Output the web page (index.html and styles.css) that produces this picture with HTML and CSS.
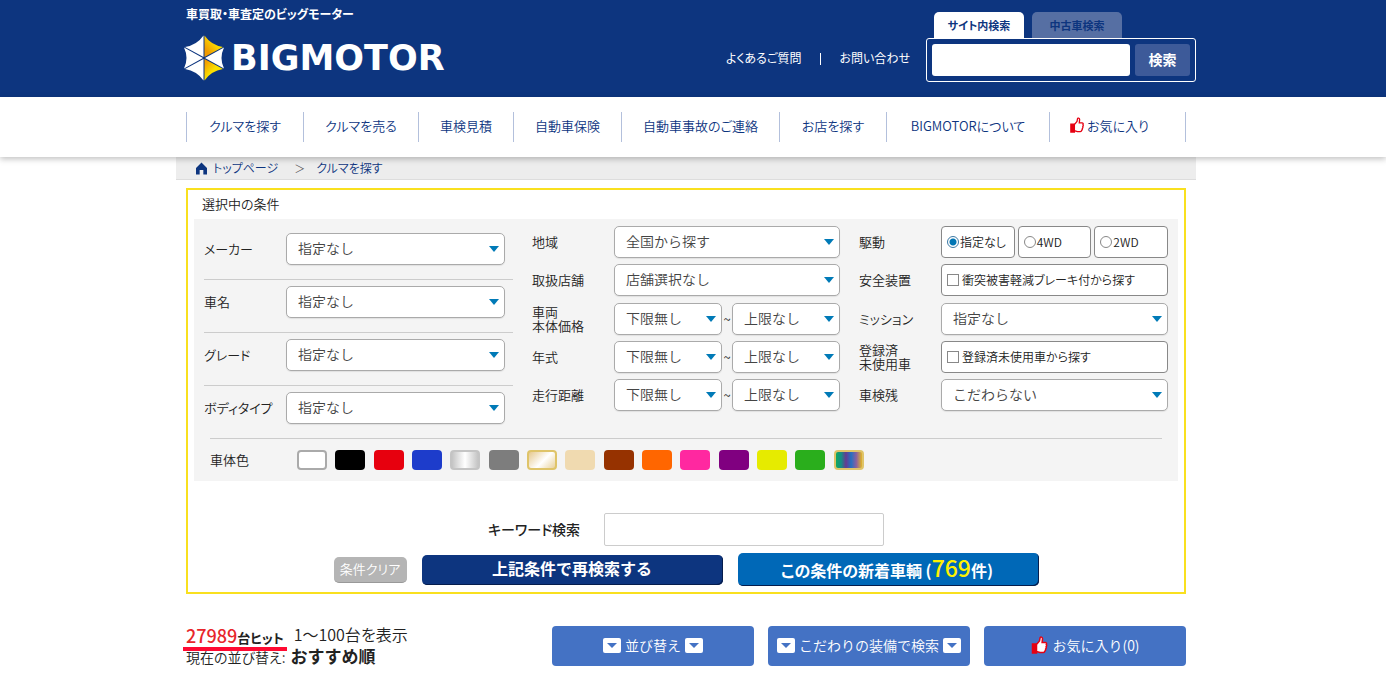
FILE: index.html
```html
<!DOCTYPE html>
<html lang="ja">
<head>
<meta charset="utf-8">
<meta name="viewport" content="width=device-width, initial-scale=1">
<title>クルマを探す | BIGMOTOR</title>
<link rel="stylesheet" href="styles.css">
</head>
<body>
<svg class="defs" aria-hidden="true">
  <symbol id="thumb" viewBox="0 0 16 18">
    <path class="thumb-cuff" d="M1 8h4v9H1z"/>
    <path class="thumb-hand" d="M5 8.5 8 5l.6-3.2C8.9.6 11 .9 11 2.8L10.6 6.500h3.200c1.200 0 1.600 1.200 1 2 .5.800.400 1.700-.2 2.300.3.900.1 1.700-.5 2.200.1 1-.1 1.700-.8 2.100-.1 1-.7 1.400-1.500 1.400H8.500L5 15.500z"/>
  </symbol>
</svg>
<header class="header">
  <div class="inner header-inner">
    <div class="brand">
      <p class="tagline">車買取・車査定のビッグモーター</p>
      <a class="logo" href="#">
        <svg class="logo-mark" viewBox="0 0 40 46" aria-hidden="true">
          <defs>
            <linearGradient id="gold1" x1="1" y1="0" x2="0" y2="1"><stop offset=".35" stop-color="#fbe000"/><stop offset=".8" stop-color="#f09a00"/></linearGradient>
            <linearGradient id="gold2" x1="0" y1="0" x2="1" y2="1"><stop offset=".1" stop-color="#f29c00"/><stop offset=".5" stop-color="#fbe000"/></linearGradient>
          </defs>
          <path fill="#fff" d="M19.500.5V22L1 12Q13 10 19.500.5zM0 12.500 19 23 0 33.500Q5 23 0 12.500zM1 34 19.500 24v21.500Q13 36 1 34zM40 12.500 21 23l19 10.500Q35 23 40 12.500z"/>
          <path fill="url(#gold1)" d="M20.500.5V22L39 12Q27 10 20.500.5z"/>
          <path fill="url(#gold2)" d="M39 34 20.500 24v21.500Q27 36 39 34z"/>
        </svg>
        <span class="logo-text">BIGMOTOR</span>
      </a>
    </div>
    <div class="header-right">
      <ul class="help-links">
        <li><a href="#">よくあるご質問</a></li>
        <li><a href="#">お問い合わせ</a></li>
      </ul>
      <form class="site-search">
        <div class="tabs">
          <button type="button" class="tab tab-on">サイト内検索</button>
          <button type="button" class="tab">中古車検索</button>
        </div>
        <div class="search-box">
          <input class="search-input" type="text" aria-label="サイト内検索">
          <button class="search-button">検索</button>
        </div>
      </form>
    </div>
  </div>
</header>
<nav class="nav">
  <ul class="inner nav-list">
    <li><a href="#">クルマを探す</a></li>
    <li><a href="#">クルマを売る</a></li>
    <li><a href="#">車検見積</a></li>
    <li><a href="#">自動車保険</a></li>
    <li><a href="#">自動車事故のご連絡</a></li>
    <li><a href="#">お店を探す</a></li>
    <li><a href="#">BIGMOTORについて</a></li>
    <li><a href="#"><svg class="thumb thumb-outline"><use href="#thumb"/></svg>お気に入り</a></li>
  </ul>
</nav>
<main class="main">
  <div class="crumbs">
    <svg class="home" viewBox="0 0 12 13" aria-hidden="true"><path fill="#0d357f" d="M6 0l6 6v7H8V8H4v5H0V6z"/></svg>
    <a href="#">トップページ</a><span class="crumb-sep">＞</span><a href="#">クルマを探す</a>
  </div>
  <div class="inner">
    <form class="finder">
      <h1 class="finder-title">選択中の条件</h1>
      <div class="panel">
        <div class="columns">
          <div class="col-a">
            <div class="row"><label for="maker">メーカー</label><span class="select"><select id="maker"><option>指定なし</option></select></span></div>
            <div class="row"><label for="model">車名</label><span class="select"><select id="model"><option>指定なし</option></select></span></div>
            <div class="row"><label for="grade">グレード</label><span class="select"><select id="grade"><option>指定なし</option></select></span></div>
            <div class="row"><label for="body">ボディタイプ</label><span class="select"><select id="body"><option>指定なし</option></select></span></div>
          </div>
          <div class="col-b">
            <div class="row"><label for="area">地域</label><span class="select"><select id="area"><option>全国から探す</option></select></span></div>
            <div class="row"><label for="shop">取扱店舗</label><span class="select"><select id="shop"><option>店舗選択なし</option></select></span></div>
            <div class="row"><label for="price">車両<br>本体価格</label><span class="range"><span class="select"><select id="price"><option>下限無し</option></select></span><span class="tilde">~</span><span class="select"><select aria-label="価格上限"><option>上限なし</option></select></span></span></div>
            <div class="row"><label for="year">年式</label><span class="range"><span class="select"><select id="year"><option>下限無し</option></select></span><span class="tilde">~</span><span class="select"><select aria-label="年式上限"><option>上限なし</option></select></span></span></div>
            <div class="row"><label for="mileage">走行距離</label><span class="range"><span class="select"><select id="mileage"><option>下限無し</option></select></span><span class="tilde">~</span><span class="select"><select aria-label="走行距離上限"><option>上限なし</option></select></span></span></div>
          </div>
          <div class="col-b">
            <div class="row"><span class="row-label">駆動</span><span class="radios">
              <label class="choice"><input type="radio" name="drive" checked>指定なし</label>
              <label class="choice"><input type="radio" name="drive">4WD</label>
              <label class="choice"><input type="radio" name="drive">2WD</label></span></div>
            <div class="row"><span class="row-label">安全装置</span><label class="choice"><input type="checkbox">衝突被害軽減ブレーキ付から探す</label></div>
            <div class="row"><label for="mission">ミッション</label><span class="select"><select id="mission"><option>指定なし</option></select></span></div>
            <div class="row"><span class="row-label">登録済<br>未使用車</span><label class="choice"><input type="checkbox">登録済未使用車から探す</label></div>
            <div class="row"><label for="inspection">車検残</label><span class="select"><select id="inspection"><option>こだわらない</option></select></span></div>
          </div>
        </div>
        <div class="colors">
          <span class="colors-label">車体色</span>
          <div class="swatches">
            <button type="button" class="swatch white" aria-label="白"></button>
            <button type="button" class="swatch black" aria-label="黒"></button>
            <button type="button" class="swatch red" aria-label="赤"></button>
            <button type="button" class="swatch blue" aria-label="青"></button>
            <button type="button" class="swatch silver" aria-label="銀"></button>
            <button type="button" class="swatch gray" aria-label="灰"></button>
            <button type="button" class="swatch gold" aria-label="金"></button>
            <button type="button" class="swatch beige" aria-label="ベージュ"></button>
            <button type="button" class="swatch brown" aria-label="茶"></button>
            <button type="button" class="swatch orange" aria-label="橙"></button>
            <button type="button" class="swatch pink" aria-label="桃"></button>
            <button type="button" class="swatch purple" aria-label="紫"></button>
            <button type="button" class="swatch yellow" aria-label="黄"></button>
            <button type="button" class="swatch green" aria-label="緑"></button>
            <button type="button" class="swatch other" aria-label="その他"></button>
          </div>
        </div>
      </div>
      <div class="keyword"><label for="keyword">キーワード検索</label><input id="keyword" type="text"></div>
      <div class="actions">
        <button type="reset" class="clear">条件クリア</button>
        <button class="submit">上記条件で再検索する</button>
        <button type="button" class="fresh">この条件の新着車輌 (<b>769</b>件)</button>
      </div>
    </form>
    <section class="results">
      <div class="summary">
        <p class="hits"><span class="hit-count"><b>27989</b>台ヒット</span><span>1～100台を表示</span></p>
        <p class="order">現在の並び替え:<b>おすすめ順</b></p>
      </div>
      <div class="tools">
        <button type="button"><i class="drop"></i>並び替え<i class="drop"></i></button>
        <button type="button"><i class="drop"></i>こだわりの装備で検索<i class="drop"></i></button>
        <button type="button"><svg class="thumb thumb-solid"><use href="#thumb"/></svg>お気に入り(0)</button>
      </div>
    </section>
  </div>
</main>
</body>
</html>
```
FILE: styles.css
```css
* { box-sizing: border-box; }
body, ul, p, h1 { margin: 0; padding: 0; }
body {
  background: #fff;
  color: #222;
  font: 350 13px/20px "Noto Sans CJK JP", sans-serif;
  font-feature-settings: "palt";
}
ul { list-style: none; }
a { color: #0d357f; text-decoration: none; }
button, input, select { font: inherit; font-feature-settings: inherit; }
button { border: 0; padding: 0; white-space: nowrap; cursor: pointer; }
.defs { position: absolute; width: 0; height: 0; }
.inner { max-width: 1000px; margin: 0 auto; }
.header, .nav, .main { padding-right: 14px; }

.header { background: #0d357f; color: #fff; }
.header a { color: #fff; }
.header-inner { display: flex; justify-content: space-between; min-height: 97px; }
.tagline { padding-top: 4px; font-size: 12px; font-weight: 700; }
.logo { display: flex; align-items: center; gap: 7px; margin: 11px 0 0 -2px; }
.logo-mark { width: 40px; height: 46px; }
.logo-text { font: 700 35px/44px "DejaVu Sans", sans-serif; }
.header-right { display: flex; align-items: flex-start; gap: 16px; margin-right: -10px; }
.help-links { display: flex; padding-top: 48px; font-size: 12px; font-weight: 400; }
.help-links li + li { position: relative; margin-left: 18px; padding-left: 20px; }
.help-links li + li::before { content: ""; position: absolute; left: 0; top: 5px; width: 1px; height: 12px; background: #fff; }
.site-search { width: 270px; padding-top: 12px; }
.tabs { display: flex; gap: 8px; padding-left: 8px; }
.tab { width: 90px; height: 26px; border-radius: 5px 5px 0 0; background: #566fa3; color: #0d357f; font-size: 11px; font-weight: 700; }
.tab-on { background: #fff; }
.search-box { display: flex; gap: 5px; padding: 5px; border: 1px solid #fff; border-radius: 3px; }
.search-input { flex: 1; min-width: 0; height: 32px; border: 0; border-radius: 3px; background: #fff; }
.search-button { width: 55px; padding-bottom: 2px; border-radius: 3px; background: #3d5a99; color: #fff; font-size: 14px; font-weight: 700; }

.nav { position: relative; padding-top: 15px; padding-bottom: 15px; background: #fff; box-shadow: 0 2px 6px rgba(0, 0, 0, .25); }
.nav-list { display: grid; grid-template-columns: 117fr 115fr 95fr 108fr 158fr 107fr 163fr 137fr; }
.nav-list li { padding-bottom: 2px; border-left: 1px solid #b3c0dc; text-align: center; line-height: 28px; white-space: nowrap; }
.nav-list li:last-child { padding-right: 16px; border-right: 1px solid #b3c0dc; }
.thumb { width: 14px; height: 16px; margin-right: 3px; vertical-align: -2px; stroke: #e60012; stroke-width: 1.5; }
.thumb-outline { fill: #fff; }
.thumb-cuff { fill: #e60012; }
.thumb-solid { width: 17px; height: 18px; margin-right: 5px; fill: #fff; vertical-align: -3px; }

.crumbs { display: flex; align-items: center; max-width: 1020px; height: 23px; margin: 0 auto; padding-left: 20px; border-bottom: 1px solid #ddd; background: #ededed; font-size: 12px; }
.home { width: 11px; height: 13px; margin-right: 6px; }
.crumb-sep { margin: 0 11px 0 16px; color: #555; font-size: 11px; }

.finder { margin-top: 8px; padding: 6px; border: 2px solid #f9e01f; }
.finder-title { padding-left: 8px; font-size: 13px; font-weight: 350; line-height: 16px; }
.panel { margin-top: 7px; padding: 7px 10px 11px; background: #f4f4f4; }
.columns { display: grid; grid-template-columns: 309fr 308fr 309fr; align-items: start; gap: 19px; }
.row { display: grid; grid-template-columns: 82px 1fr; align-items: center; line-height: 14px; }
.col-a { display: grid; grid-template-rows: repeat(4, 53px); }
.col-a .row { padding: 0 8px 8px 0; }
.col-a .row + .row { border-top: 1px solid #ccc; }
.col-b { display: flex; flex-direction: column; justify-content: space-between; min-height: 185px; }
.select { position: relative; display: block; }
.select::after { content: ""; position: absolute; right: 6px; top: 13px; border: 5px solid transparent; border-top: 6px solid #007ab7; border-bottom: 0; pointer-events: none; }
select { appearance: none; display: block; width: 100%; height: 32px; padding: 0 12px 2px 11px; border: 1px solid #aaa; border-radius: 5px; background: #fff; color: #444; font-size: 14px; font-feature-settings: normal; box-shadow: 0 1px 1px rgba(0, 0, 0, .08); }
.range { display: grid; grid-template-columns: 1fr 10px 1fr; align-items: center; }
.tilde { text-align: center; }
.radios { display: grid; grid-template-columns: repeat(3, 1fr); gap: 3px; }
.choice { display: flex; align-items: center; height: 32px; padding-left: 5px; border: 1px solid #888; border-radius: 4px; background: #fff; font-size: 12px; white-space: nowrap; }
.choice input { appearance: none; width: 12px; height: 12px; margin: 0 1px 0 0; border: 1px solid #888; background: #fff; }
.choice input[type="checkbox"] { margin-right: 3px; }
.choice input[type="radio"] { border-radius: 50%; }
.choice input[type="radio"]:checked { border-color: #3c79a5; background: radial-gradient(#0075b4 3px, #fff 4px); }
.colors { display: flex; align-items: center; margin: 0 6px; padding-top: 11px; border-top: 1px solid #ccc; }
.colors-label { width: 87px; }
.swatches { display: flex; flex: 0 1 567px; justify-content: space-between; }
.swatch { width: 30px; height: 20px; border-radius: 4px; }
.white { border: 2px solid #aaa; background: #fff; }
.black { background: #000; }
.red { background: #e7000e; }
.blue { background: #1d3ccb; }
.silver { border: 2px solid #c4c4c4; background: linear-gradient(90deg, #c4c4c4, #fff 50%, #c4c4c4); }
.gray { background: #7d7d7d; }
.gold { border: 2px solid #dfc469; background: linear-gradient(135deg, #e6c98e, #fff 55%, #e9d29c); }
.beige { background: #f0dab0; }
.brown { background: #963200; }
.orange { background: #f60; }
.pink { background: #ff28a0; }
.purple { background: #800080; }
.yellow { background: #e6eb00; }
.green { background: #2aae1c; }
.other { border: 2px solid #dfc469; background: linear-gradient(90deg, #10a860, #168d85 20%, #673a91 38%, #266fc0 58%, #8a60a0 78%, #e0b429); }

.keyword { display: flex; justify-content: center; align-items: center; gap: 24px; margin-top: 32px; font-size: 14px; font-weight: 500; }
.keyword label { padding-bottom: 2px; }
.keyword input { width: 280px; height: 33px; border: 1px solid #ccc; border-radius: 2px; }
.actions { display: flex; justify-content: center; align-items: center; gap: 15px; margin-top: 7px; }
.actions button { color: #fff; }
.actions .clear { width: 73px; height: 26px; border-radius: 5px; border-bottom: 1px solid #999; background: #b5b5b5; }
.submit, .fresh { width: 301px; height: 30px; padding-bottom: 3px; border-radius: 5px; background: #0d357f; font-size: 16px; font-weight: 700; box-shadow: inset -1px -1px #061d4c; }
.submit { font-feature-settings: normal; }
.fresh { height: 33px; padding: 0 8px 5px 6px; background: #0068b7; }
.fresh b { color: #fff100; font-size: 23px; font-weight: 500; line-height: 26px; }

.results { display: flex; justify-content: space-between; padding: 32px 0 8px; }
.hits { display: flex; align-items: flex-start; gap: 10px; font-size: 16px; line-height: 16px; }
.hit-count { position: relative; font-size: 13px; font-weight: 700; line-height: 18px; }
.hit-count::after { content: ""; position: absolute; left: -3px; right: -3px; bottom: -4px; height: 4px; background: #ff0a32; }
.hit-count b { color: #e8262b; font-size: 18px; font-weight: 500; }
.order { font-size: 14px; line-height: 18px; }
.order b { margin-left: 5px; font-size: 17px; font-feature-settings: normal; }
.tools { display: grid; grid-template-columns: repeat(3, 202px); gap: 14px; }
.tools button { height: 40px; padding-bottom: 2px; border-radius: 4px; background: #4472c4; color: #fff; font-size: 14px; font-feature-settings: normal; }
.drop { display: inline-block; width: 18px; height: 15px; margin: 0 4px; padding: 5px 4px; border-radius: 2px; background: #fff; vertical-align: -2px; }
.drop::after { content: ""; display: block; border: 5px solid transparent; border-top-color: #4472c4; border-bottom: 0; }
```
